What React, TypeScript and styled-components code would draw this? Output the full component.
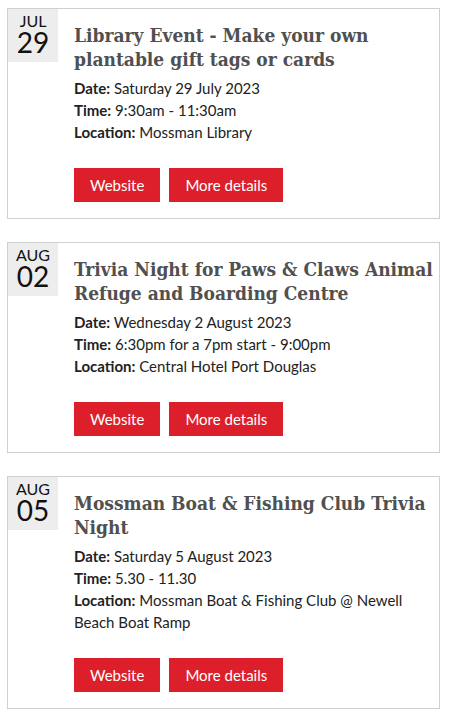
import React from 'react'
import styled, { createGlobalStyle } from 'styled-components'

const GlobalStyle = createGlobalStyle`
  body {
    margin: 0;
    background: #fff;
    font-family: Lato, 'Liberation Sans', sans-serif;
  }
`

const List = styled.div`
  padding: 8px 9px 0 7px;
  display: flex;
  flex-direction: column;
  gap: 23px;
`

const Card = styled.article`
  border: 1px solid #cfcfcf;
  display: flex;
  align-items: flex-start;
  padding-bottom: 16px;
`

const DateBadge = styled.div`
  width: 50px;
  height: 53px;
  background: #ededed;
  display: flex;
  flex-direction: column;
  align-items: center;
  color: #111;
  flex-shrink: 0;
`

const Month = styled.div`
  font-size: 16px;
  line-height: 18px;
  margin-top: 3px;
`

const Day = styled.div`
  font-size: 28px;
  line-height: 24px;
`

const Body = styled.div`
  flex: 1;
  padding: 14px 6px 0 16px;
`

const Title = styled.h2`
  margin: 0 0 6px;
  font-family: 'DejaVu Serif Condensed', 'DejaVu Serif', 'Liberation Serif', serif;
  font-stretch: semi-condensed;
  font-weight: bold;
  font-size: 19px;
  line-height: 24px;
  color: #505050;
`

const Line = styled.div`
  font-size: 15px;
  line-height: 22px;
  color: #222;

  b {
    font-weight: bold;
  }
`

const Actions = styled.div`
  display: flex;
  gap: 9px;
  margin-top: 25px;
`

const Button = styled.a`
  display: inline-block;
  background: #dc1f2a;
  color: #fff;
  font-size: 15px;
  line-height: 34px;
  height: 34px;
  padding: 0 16px;
  text-decoration: none;
`

type Event = {
  month: string
  day: string
  title: string
  date: string
  time: string
  location: string
}

const events: Event[] = [
  {
    month: 'JUL',
    day: '29',
    title: 'Library Event - Make your own plantable gift tags or cards',
    date: 'Saturday 29 July 2023',
    time: '9:30am - 11:30am',
    location: 'Mossman Library',
  },
  {
    month: 'AUG',
    day: '02',
    title: 'Trivia Night for Paws & Claws Animal Refuge and Boarding Centre',
    date: 'Wednesday 2 August 2023',
    time: '6:30pm for a 7pm start - 9:00pm',
    location: 'Central Hotel Port Douglas',
  },
  {
    month: 'AUG',
    day: '05',
    title: 'Mossman Boat & Fishing Club Trivia Night',
    date: 'Saturday 5 August 2023',
    time: '5.30 - 11.30',
    location: 'Mossman Boat & Fishing Club @ Newell Beach Boat Ramp',
  },
]

const App: React.FC = () => {
  return (
    <>
      <GlobalStyle />
      <List>
        {events.map((ev) => (
          <Card key={ev.title}>
            <DateBadge>
              <Month>{ev.month}</Month>
              <Day>{ev.day}</Day>
            </DateBadge>
            <Body>
              <Title>{ev.title}</Title>
              <Line><b>Date:</b> {ev.date}</Line>
              <Line><b>Time:</b> {ev.time}</Line>
              <Line><b>Location:</b> {ev.location}</Line>
              <Actions>
                <Button href="#">Website</Button>
                <Button href="#">More details</Button>
              </Actions>
            </Body>
          </Card>
        ))}
      </List>
    </>
  )
}

export default App
